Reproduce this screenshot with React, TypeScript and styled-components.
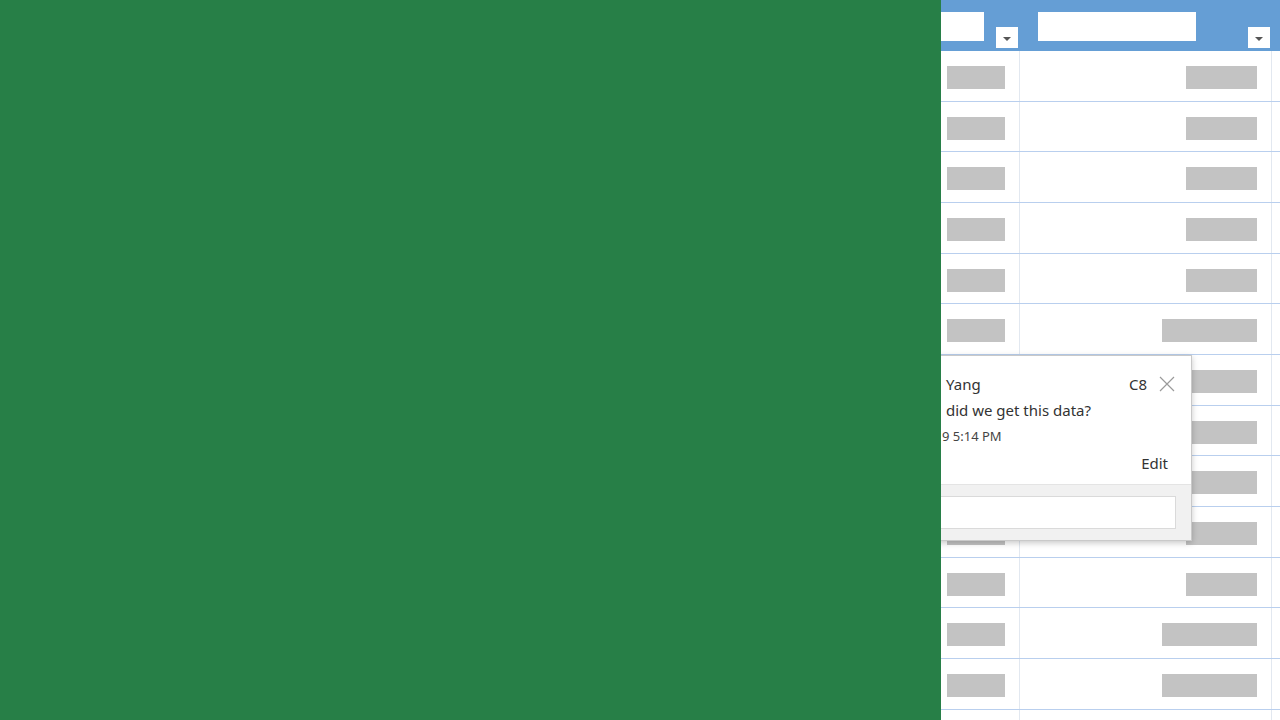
import * as React from 'react'
import styled, { createGlobalStyle } from 'styled-components'

const GlobalStyle = createGlobalStyle`
  html, body {
    margin: 0;
    padding: 0;
    overflow: hidden;
  }
  body {
    font-family: "Noto Sans", "Open Sans", Arial, sans-serif;
  }
`

const Page = styled.div`
  display: flex;
  width: 1280px;
  height: 720px;
  background: #ffffff;
`

const SidePanel = styled.div`
  width: 941px;
  flex-shrink: 0;
  background: #277f47;
`

const SheetArea = styled.div`
  position: relative;
  flex: 1;
  overflow: hidden;
  background: #ffffff;
`

// the sheet is scrolled: part of the first column sits under the side panel
const Sheet = styled.div`
  margin-left: -42px;
  width: 500px;
`

const COLUMNS = '121px 252px 127px'

const HeaderRow = styled.div`
  display: grid;
  grid-template-columns: ${COLUMNS};
  height: 51px;
  background: #659ed5;
`

const HeaderCell = styled.div`
  display: flex;
  align-items: flex-start;
  padding: 12px 2px 0 18px;
`

const FilterInput = styled.div<{ $width: number }>`
  width: ${p => p.$width}px;
  height: 29px;
  background: #ffffff;
`

const FilterButton = styled.div`
  margin-left: auto;
  margin-top: 15px;
  width: 22px;
  height: 21px;
  background: #ffffff;
  display: flex;
  align-items: center;
  justify-content: center;

  &::after {
    content: '';
    border-left: 4px solid transparent;
    border-right: 4px solid transparent;
    border-top: 4px solid #555555;
    margin-top: 2px;
  }
`

const Row = styled.div`
  display: grid;
  grid-template-columns: ${COLUMNS};
  height: 50.67px;
  box-sizing: border-box;
  border-bottom: 1px solid #b9cfee;
`

const Cell = styled.div`
  display: flex;
  justify-content: flex-end;
  align-items: flex-start;
  padding: 15px 14px 0 0;
  border-right: 1px solid #e2e8f0;
`

const Bar = styled.div<{ $width: number }>`
  width: ${p => p.$width}px;
  height: 23px;
  background: #c3c3c3;
`

const CommentCard = styled.div`
  position: absolute;
  top: 355px;
  right: 88px;
  width: 262px;
  box-sizing: border-box;
  background: #ffffff;
  border: 1px solid #c9c9c9;
  box-shadow: 0 2px 6px rgba(0, 0, 0, 0.22);
  color: #333333;
  font-size: 15px;
`

const CommentBody = styled.div`
  padding: 15px 0 7px 15px;
`

const Line = styled.div`
  display: flex;
  align-items: center;
  height: 26px;
  white-space: nowrap;
`

const CellRef = styled.span`
  margin-left: auto;
`

const CloseButton = styled.button`
  border: none;
  background: none;
  padding: 0;
  margin: 0 16px 0 12px;
  width: 16px;
  height: 16px;
  display: flex;
  cursor: pointer;
`

const Timestamp = styled(Line)`
  font-size: 13px;
  color: #444444;
  margin-left: -4px;
`

const EditLink = styled(Line)`
  justify-content: flex-end;
  padding-right: 23px;
  height: 28px;
`

const ReplyArea = styled.div`
  background: #f1f1f1;
  border-top: 1px solid #e4e4e4;
  padding: 11px 15px 11px 0;
`

const ReplyInput = styled.div`
  height: 33px;
  box-sizing: border-box;
  background: #ffffff;
  border: 1px solid #dadada;
`

const rows: [number, number][] = [
  [58, 71], [58, 71], [58, 71], [58, 71], [58, 71], [58, 95], [58, 71],
  [58, 71], [58, 71], [58, 71], [58, 71], [58, 95], [58, 95], [58, 71],
]

export default function App() {
  return (
    <Page>
      <GlobalStyle />
      <SidePanel />
      <SheetArea>
        <Sheet>
          <HeaderRow>
            <HeaderCell>
              <FilterInput $width={67} />
              <FilterButton />
            </HeaderCell>
            <HeaderCell>
              <FilterInput $width={158} />
              <FilterButton />
            </HeaderCell>
            <HeaderCell />
          </HeaderRow>
          {rows.map(([a, b], i) => (
            <Row key={i}>
              <Cell><Bar $width={a} /></Cell>
              <Cell><Bar $width={b} /></Cell>
              <Cell />
            </Row>
          ))}
        </Sheet>
        <CommentCard>
          <CommentBody>
            <Line>
              Yang
              <CellRef>C8</CellRef>
              <CloseButton aria-label="Close">
                <svg width="16" height="16" viewBox="0 0 16 16">
                  <path d="M1 1 L15 15 M15 1 L1 15" stroke="#9a9a9a" strokeWidth="1.2" fill="none" />
                </svg>
              </CloseButton>
            </Line>
            <Line>did we get this data?</Line>
            <Timestamp>9 5:14 PM</Timestamp>
            <EditLink>Edit</EditLink>
          </CommentBody>
          <ReplyArea>
            <ReplyInput />
          </ReplyArea>
        </CommentCard>
      </SheetArea>
    </Page>
  )
}
